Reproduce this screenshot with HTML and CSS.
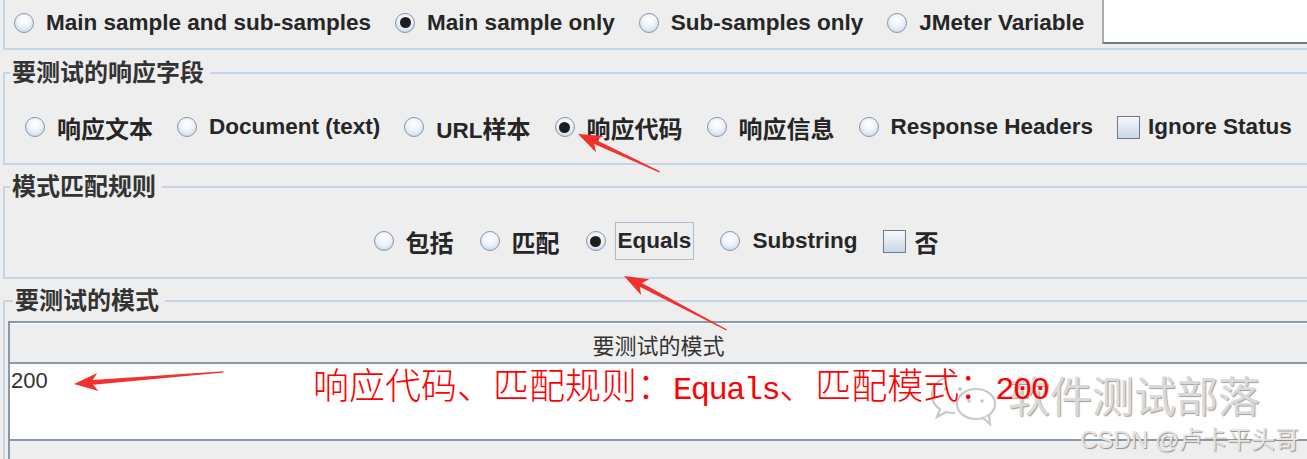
FILE: index.html
```html
<!DOCTYPE html>
<html lang="zh">
<head>
<meta charset="utf-8">
<title>Response Assertion</title>
<link rel="stylesheet" href="styles.css">
</head>
<body>
<div class="top">
  <div class="row">
    <label class="opt"><span class="radio"></span><span>Main sample and sub-samples</span></label>
    <label class="opt"><span class="radio on"></span><span>Main sample only</span></label>
    <label class="opt"><span class="radio"></span><span>Sub-samples only</span></label>
    <label class="opt"><span class="radio"></span><span>JMeter Variable</span></label>
  </div>
  <div class="field"></div>
</div>

<fieldset class="group first">
  <legend>要测试的响应字段</legend>
  <div class="row left">
    <label class="opt"><span class="radio"></span><span class="zh">响应文本</span></label>
    <label class="opt"><span class="radio"></span><span>Document (text)</span></label>
    <label class="opt"><span class="radio"></span><span>URL<span class="zh">样本</span></span></label>
    <label class="opt"><span class="radio on"></span><span class="zh">响应代码</span></label>
    <label class="opt"><span class="radio"></span><span class="zh">响应信息</span></label>
    <label class="opt"><span class="radio"></span><span>Response Headers</span></label>
    <label class="opt chk"><span class="check"></span><span>Ignore Status</span></label>
  </div>
</fieldset>

<fieldset class="group">
  <legend>模式匹配规则</legend>
  <div class="row center">
    <label class="opt"><span class="radio"></span><span class="zh">包括</span></label>
    <label class="opt"><span class="radio"></span><span class="zh">匹配</span></label>
    <label class="opt"><span class="radio on"></span><span class="focus">Equals</span></label>
    <label class="opt"><span class="radio"></span><span>Substring</span></label>
    <label class="opt chk"><span class="check"></span><span class="zh">否</span></label>
  </div>
</fieldset>

<fieldset class="group patterns">
  <legend>要测试的模式</legend>
  <div class="table">
    <div class="thead">要测试的模式</div>
    <div class="tbody">200</div>
  </div>
</fieldset>

<svg class="overlay" width="1307" height="459" viewBox="0 0 1307 459" xmlns="http://www.w3.org/2000/svg">
  <g fill="#ffffff" fill-opacity="0.6" stroke="#c9c9c9" stroke-width="2.2">
    <path d="M955 376 C941 376 932 385 932 395 C932 401 935 406 940 409 L937 417 L946 412 C949 413 952 413 955 413"/>
    <ellipse cx="976" cy="404" rx="19" ry="15"/>
    <path d="M983 418 L990 424 L989 415"/>
  </g>
  <g fill="#c9c9c9">
    <circle cx="946" cy="389" r="2"/>
    <circle cx="960" cy="389" r="2"/>
    <circle cx="969" cy="401" r="1.8"/>
    <circle cx="982" cy="401" r="1.8"/>
  </g>
</svg>
<div class="wm">软件测试部落</div>
<div class="note">响应代码、匹配规则：<span class="mono">Equals</span>、匹配模式：<span class="mono">200</span></div>
<div class="csdn">CSDN @卢卡平头哥</div>

<svg class="overlay" width="1307" height="459" viewBox="0 0 1307 459" xmlns="http://www.w3.org/2000/svg">
  <g fill="#f2302c">
    <polygon transform="translate(578 134) rotate(24.9)" points="0,0 24,-9 19,-2.2 90,-0.6 90,0.6 19,2.2 24,9"/>
    <polygon transform="translate(624 276) rotate(27.7)" points="0,0 24,-9 19,-2.2 116,-0.6 116,0.6 19,2.2 24,9"/>
    <polygon transform="translate(74 384) rotate(-4.6)" points="0,0 24,-9 19,-2.4 150,-0.6 150,0.6 19,2.4 24,9"/>
  </g>
</svg>
</body>
</html>
```

FILE: styles.css
```css
* { box-sizing: border-box; }
html, body { margin: 0; padding: 0; }
body {
  width: 1307px;
  height: 459px;
  overflow: hidden;
  position: relative;
  background: #eeeeee;
  color: #262626;
  font-family: "Liberation Sans", "Noto Sans CJK SC", sans-serif;
}

.top {
  margin-left: 3px;
  height: 50px;
  border-left: 2px solid #c6d5e5;
  border-bottom: 2px solid #c6d5e5;
  padding-left: 9px;
  display: flex;
  align-items: flex-start;
}
.field {
  flex: 1;
  height: 44px;
  margin-left: 18px;
  background: #ffffff;
  border-left: 2px solid #a3abb4;
  border-bottom: 2px solid #6f7c8a;
}

.row {
  display: flex;
  align-items: center;
  gap: 24px;
  height: 45px;
  font-size: 22.5px;
  font-weight: 700;
  white-space: nowrap;
}
.row.left { padding-left: 20px; height: 30px; gap: 24px; }
.row.center { justify-content: center; height: 30px; gap: 26px; }

.opt { display: flex; align-items: center; gap: 12px; }
.opt.chk { gap: 8px; }
.zh { font-size: 24px; }

.radio {
  flex: none;
  width: 20px;
  height: 20px;
  border-radius: 50%;
  border: 1px solid #8497ae;
  background: radial-gradient(circle at 50% 35%, #ffffff 0%, #eef3f9 45%, #bccde2 100%);
  display: flex;
  align-items: center;
  justify-content: center;
}
.radio.on::after {
  content: "";
  width: 11px;
  height: 11px;
  border-radius: 50%;
  background: #1d1d1d;
}
.check {
  flex: none;
  width: 23px;
  height: 23px;
  border: 1px solid #6c7a89;
  background: linear-gradient(#f7f9fc, #c8d6e7);
}
.focus {
  margin-left: -3px;
  padding: 5px 2px;
  border: 1px solid #a9bccf;
  line-height: 26px;
}

.group {
  margin: 7px 0 0 3px;
  padding: 24px 0 21px 0;
  border: 2px solid #c6d5e5;
  border-right: none;
  min-width: 0;
}
.group.first { margin-top: 8px; }
.group legend {
  margin-left: 5px;
  padding: 0 6px 0 2px;
  font-size: 24px;
  line-height: 30px;
  font-weight: 700;
  color: #333333;
}

.group.patterns {
  padding: 5px 0 0 3px;
  border-bottom: none;
}
.table {
  height: 200px;
  background: #eeeeee;
  border-left: 2px solid #8a98a8;
  border-top: 2px solid #8a98a8;
}
.thead {
  height: 41px;
  border-bottom: 2px solid #8a98a8;
  box-shadow: inset 0 1px 0 #ffffff;
  display: flex;
  align-items: center;
  justify-content: center;
  padding-top: 3px;
  font-size: 22px;
  color: #333333;
}
.tbody {
  height: 77px;
  background: #ffffff;
  border-bottom: 2px solid #8a98a8;
  padding: 4px 0 0 1px;
  font-size: 22px;
  line-height: 26px;
  color: #333333;
}

.note {
  position: absolute;
  left: 313px;
  top: 363px;
  font-family: "Noto Sans CJK SC", sans-serif;
  font-size: 36px;
  line-height: 40px;
  font-weight: 300;
  color: #ff0000;
  white-space: nowrap;
}
.note .mono {
  font-family: "Liberation Mono", monospace;
  font-size: 32px;
  letter-spacing: -1.5px;
}
.wm {
  position: absolute;
  left: 1008px;
  top: 368px;
  font-family: "Noto Sans CJK SC", sans-serif;
  font-size: 42px;
  line-height: 52px;
  color: #dadada;
  text-shadow: 1px 1px 1px #9e9e9e;
  white-space: nowrap;
}
.csdn {
  position: absolute;
  left: 1080px;
  top: 425px;
  font-family: "Liberation Sans", "Noto Sans CJK SC", sans-serif;
  font-size: 24px;
  line-height: 30px;
  color: #e4e4e4;
  text-shadow: 1px 1px 1px #8f8f8f;
  white-space: nowrap;
}
.overlay {
  position: absolute;
  left: 0;
  top: 0;
  pointer-events: none;
}
```
